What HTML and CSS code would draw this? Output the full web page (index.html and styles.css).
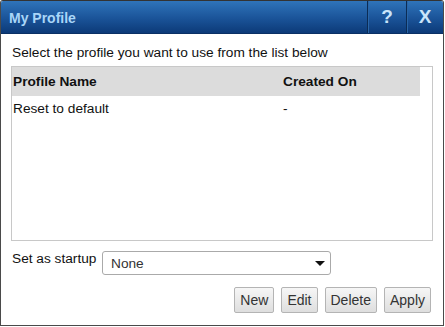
FILE: index.html
```html
<!DOCTYPE html>
<html lang="en">

<head>
    <meta charset="UTF-8">
    <title>My Profile</title>
    <link rel="stylesheet" href="styles.css">
</head>

<body>
    <div class="dialog">
        <div class="titlebar">
            <span class="title">My Profile</span>
            <span class="tb-btn">?</span>
            <span class="tb-btn">X</span>
        </div>
        <div class="body">
            <div class="hint">Select the profile you want to use from the list below</div>
            <div class="grid">
                <div class="row head">
                    <span class="c-name">Profile Name</span>
                    <span class="c-date">Created On</span>
                </div>
                <div class="row">
                    <span class="c-name">Reset to default</span>
                    <span class="c-date">-</span>
                </div>
            </div>
            <div class="startup">
                <span class="label">Set as startup</span>
                <div class="select">
                    <span>None</span>
                    <span class="arrow"></span>
                </div>
            </div>
            <div class="actions">
                <button>New</button>
                <button>Edit</button>
                <button>Delete</button>
                <button>Apply</button>
            </div>
        </div>
    </div>
</body>

</html>
```

FILE: styles.css
```css
* {
    margin: 0;
    padding: 0;
    box-sizing: border-box;
    font-family: 'Liberation Sans', Arial, sans-serif;
}

body {
    background: #ffffff;
    width: 445px;
    height: 327px;
}

.dialog {
    width: 444px;
    height: 326px;
    border: 1px solid #4a4a4a;
    border-top-color: #333;
    border-radius: 3px 3px 0 0;
    background: #fff;
    display: flex;
    flex-direction: column;
    overflow: hidden;
}

.titlebar {
    height: 33px;
    display: flex;
    align-items: stretch;
    background: linear-gradient(#2f74ba, #1a5398 55%, #0c3a78);
    border-bottom: 1px solid #0a3064;
}

.title {
    flex: 1;
    padding-left: 8px;
    display: flex;
    align-items: center;
    color: #a9d6f8;
    font-weight: bold;
    font-size: 14px;
    padding-top: 1px;
}

.tb-btn {
    width: 39px;
    display: flex;
    align-items: center;
    justify-content: center;
    border-left: 1px solid #0b2c55;
    box-shadow: inset 1px 0 0 #2a66a8;
    color: #c9e4fa;
    font-weight: bold;
    font-size: 19px;
}

.tb-btn:last-child {
    width: 37px;
}

.body {
    flex: 1;
    padding: 10px 11px 0 10px;
    display: flex;
    flex-direction: column;
}

.hint {
    font-size: 13.7px;
    color: #111;
    height: 22px;
    padding-left: 1px;
    padding-top: 1px;
}

.grid {
    height: 175px;
    width: 422px;
    border: 1px solid #c8c8c8;
    padding-right: 12px;
}

.row {
    display: flex;
    height: 25px;
    align-items: center;
    font-size: 13.7px;
    color: #111;
}

.row.head {
    height: 29px;
    background: #dcdcdc;
    font-weight: bold;
}

.c-name {
    width: 271px;
    padding-left: 1px;
}

.startup {
    display: flex;
    align-items: flex-start;
    margin-top: 10px;
    height: 36px;
}

.label {
    font-size: 13.7px;
    color: #111;
    width: 91px;
    padding-left: 1px;
}

.select {
    width: 229px;
    height: 24px;
    border: 1px solid #aaa;
    border-radius: 3px;
    display: flex;
    align-items: center;
    justify-content: space-between;
    padding: 0 5px 0 8px;
    font-size: 13.7px;
    color: #333;
}

.arrow {
    width: 0;
    height: 0;
    border-left: 5px solid transparent;
    border-right: 5px solid transparent;
    border-top: 5px solid #111;
}

.actions {
    display: flex;
    justify-content: flex-end;
    gap: 7px;
    padding-right: 1px;
}

.actions button {
    height: 26px;
    padding: 0 5px;
    font-size: 14px;
    color: #333;
    border: 1px solid #b4b4b4;
    border-radius: 2px;
    background: linear-gradient(#f6f6f6, #dedede);
}
```
